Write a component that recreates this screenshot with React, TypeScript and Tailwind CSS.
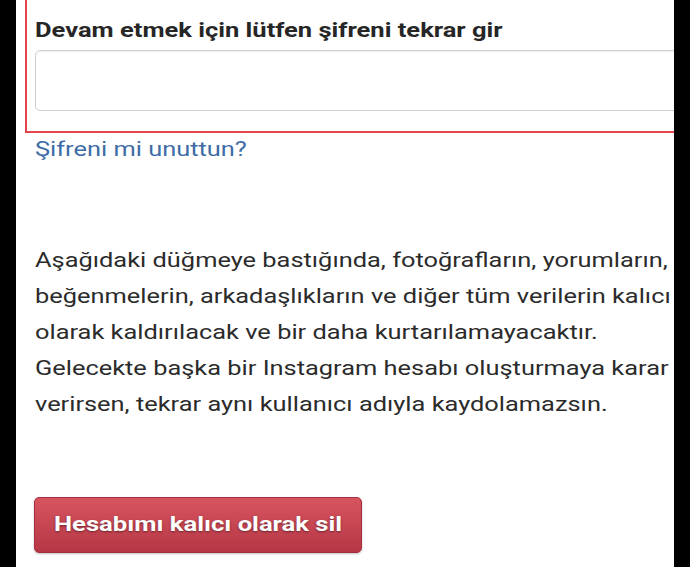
export default function App() {
  return (
    <div className="flex h-[567px] w-[690px] overflow-hidden bg-black font-['Roboto',sans-serif]">
      <div className="ml-[16px] w-[658px] shrink-0 overflow-hidden bg-white">
        <div className="-mt-[4px] ml-[9px] w-[700px] border-2 border-[#e3434a] pb-[20px] pl-[8px] pt-[20px]">
          <label className="mb-[8px] block origin-left scale-x-[1.275] text-[20px] font-bold leading-[24px] text-[#262626]">
            Devam etmek için lütfen şifreni tekrar gir
          </label>
          <input
            type="password"
            className="block h-[61px] w-[720px] rounded-[5px] border border-[#cfcfcf] bg-white shadow-[inset_0_1px_2px_rgba(0,0,0,0.06)] outline-none"
          />
        </div>

        <a
          href="#"
          className="ml-[19px] mt-[4px] block origin-left scale-x-[1.27] text-[20px] leading-[24px] text-[#3d6ca6]"
        >
          Şifreni mi unuttun?
        </a>

        <p className="ml-[19px] mt-[81px] w-[700px] origin-left scale-x-[1.27] whitespace-nowrap text-[20px] leading-[36px] text-[#2b2b2b]">
          Aşağıdaki düğmeye bastığında, fotoğrafların, yorumların,
          <br />
          beğenmelerin, arkadaşlıkların ve diğer tüm verilerin kalıcı
          <br />
          olarak kaldırılacak ve bir daha kurtarılamayacaktır.
          <br />
          Gelecekte başka bir Instagram hesabı oluşturmaya karar
          <br />
          verirsen, tekrar aynı kullanıcı adıyla kaydolamazsın.
        </p>

        <button className="ml-[18px] mt-[75px] flex h-[56px] w-[328px] items-center justify-center rounded-[5px] border border-[#a52f3c] bg-gradient-to-b from-[#d6555f] to-[#b73646] shadow-[0_1px_2px_rgba(0,0,0,0.25)]">
          <span className="inline-block scale-x-[1.22] text-[21px] font-bold text-white [text-shadow:0_1px_2px_rgba(0,0,0,0.45)]">
            Hesabımı kalıcı olarak sil
          </span>
        </button>
      </div>
      <div className="flex-1 bg-black" />
    </div>
  );
}
